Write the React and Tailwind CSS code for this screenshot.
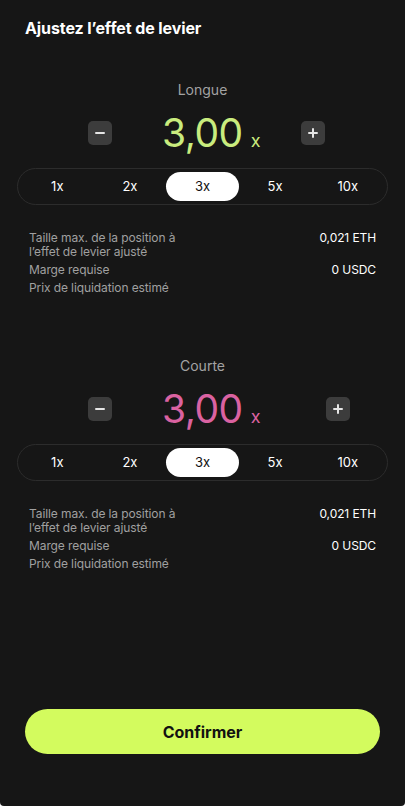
import { useState } from 'react';

const LEVELS = ['1x', '2x', '3x', '5x', '10x'];

const MinusIcon = () => (
  <svg width="12" height="12" viewBox="0 0 12 12" fill="none">
    <path d="M2 6h8" stroke="#e5e5e5" strokeWidth="2" strokeLinecap="round" />
  </svg>
);

const PlusIcon = () => (
  <svg width="12" height="12" viewBox="0 0 12 12" fill="none">
    <path d="M2 6h8M6 2v8" stroke="#e5e5e5" strokeWidth="2" strokeLinecap="round" />
  </svg>
);

const InfoRows = () => (
  <div className="mt-[26px] px-[29px] flex flex-col gap-[4px] text-[12px] leading-[14px] tracking-[-0.1px]">
    <div className="flex justify-between">
      <span className="text-[#a0a0a0]">
        Taille max. de la position à<br />l’effet de levier ajusté
      </span>
      <span className="text-white">0,021 ETH</span>
    </div>
    <div className="flex justify-between">
      <span className="text-[#a0a0a0]">Marge requise</span>
      <span className="text-white">0 USDC</span>
    </div>
    <div className="flex justify-between">
      <span className="text-[#a0a0a0]">Prix de liquidation estimé</span>
    </div>
  </div>
);

const LeverageSection = ({ label, colorClass, plusGap, className }) => {
  const [active, setActive] = useState('3x');

  return (
    <div className={className}>
      <p className="text-center text-[14px] leading-[18px] text-[#a3a3a3]">{label}</p>

      <div className="mt-[12px] h-[44px] flex items-center pl-[88px]">
        <button className="w-[24px] h-[24px] rounded-[5px] bg-[#3c3c3c] flex items-center justify-center">
          <MinusIcon />
        </button>
        <div className={`ml-[50px] flex items-baseline ${colorClass}`}>
          <span className="text-[39px] leading-[44px] font-normal tracking-[-0.5px]">3,00</span>
          <span className="ml-[8px] text-[18px] leading-[18px]">x</span>
        </div>
        <button
          className={`${plusGap} w-[24px] h-[24px] rounded-[5px] bg-[#3c3c3c] flex items-center justify-center`}
        >
          <PlusIcon />
        </button>
      </div>

      <div className="mt-[13px] mx-[17px] h-[37px] rounded-full border border-[#2c2c2c] p-[3px] grid grid-cols-5">
        {LEVELS.map((lvl) => (
          <button
            key={lvl}
            onClick={() => setActive(lvl)}
            className={`rounded-full text-[13px] ${
              active === lvl ? 'bg-white text-[#111]' : 'text-white'
            }`}
          >
            {lvl}
          </button>
        ))}
      </div>

      <InfoRows />
    </div>
  );
};

export default function App() {
  return (
    <div
      className="w-[405px] h-[806px] bg-[#161616] rounded-b-[4px] flex flex-col"
      style={{ fontFamily: 'Inter, "Noto Sans", sans-serif' }}
    >
      <h1 className="px-[25px] pt-[19px] text-[16px] leading-[18px] font-bold text-white tracking-[-0.1px]">
        Ajustez l’effet de levier
      </h1>

      <LeverageSection
        label="Longue"
        colorClass="text-[#c9ec7e]"
        plusGap="ml-[40px]"
        className="mt-[44px]"
      />

      <LeverageSection
        label="Courte"
        colorClass="text-[#da62a1]"
        plusGap="ml-[65px]"
        className="mt-[62px]"
      />

      <button className="mt-auto mb-[52px] mx-[25px] h-[45px] rounded-full bg-[#d3fb5e] text-[#111] text-[16px] font-bold">
        Confirmer
      </button>
    </div>
  );
}
